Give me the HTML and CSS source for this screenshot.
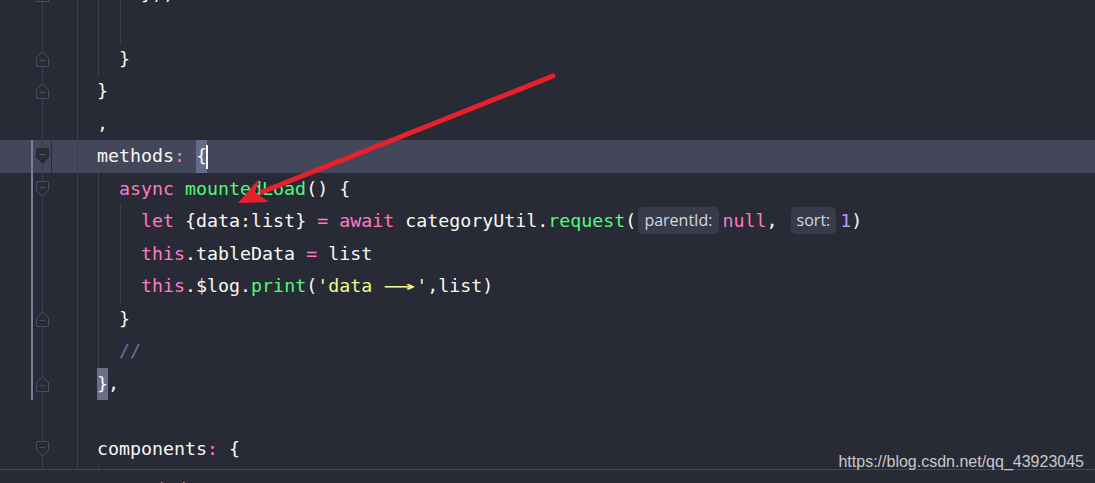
FILE: index.html
```html
<!DOCTYPE html>
<html>

<head>
    <meta charset="utf-8">
    <link rel="stylesheet" href="styles.css">
</head>

<body>
    <div class="editor">
        <div class="lines">
            <div class="line">
                <div class="gutter"><svg class="fold" viewBox="0 0 13 16"><path d="M0.5 15.5V6.5L6.5 0.5L12.5 6.5V15.5Z"/><path class="minus" d="M3.5 9.5H9.5"/></svg></div>
                <div class="code g1 g2">    }),</div>
            </div>
            <div class="line">
                <div class="gutter"></div>
                <div class="code g1 g2"></div>
            </div>
            <div class="line">
                <div class="gutter"><svg class="fold" viewBox="0 0 13 16"><path d="M0.5 15.5V6.5L6.5 0.5L12.5 6.5V15.5Z"/><path class="minus" d="M3.5 9.5H9.5"/></svg></div>
                <div class="code g1">  }</div>
            </div>
            <div class="line">
                <div class="gutter"><svg class="fold" viewBox="0 0 13 16"><path d="M0.5 15.5V6.5L6.5 0.5L12.5 6.5V15.5Z"/><path class="minus" d="M3.5 9.5H9.5"/></svg></div>
                <div class="code">}</div>
            </div>
            <div class="line">
                <div class="gutter"></div>
                <div class="code">,</div>
            </div>
            <div class="line current">
                <div class="gutter scope"><svg class="fold solid" viewBox="0 0 13 16"><path d="M0.5 0.5H12.5V9.5L6.5 15.5L0.5 9.5Z"/><path class="minus" d="M3.5 6.5H9.5"/></svg></div>
                <div class="code">methods<span class="kw">:</span> <span class="match">{</span><span class="caret"></span></div>
            </div>
            <div class="line">
                <div class="gutter scope"><svg class="fold" viewBox="0 0 13 16"><path d="M0.5 0.5H12.5V9.5L6.5 15.5L0.5 9.5Z"/><path class="minus" d="M3.5 6.5H9.5"/></svg></div>
                <div class="code g1">  <span class="kw">async</span> <span class="fn">mountedLoad</span>() {</div>
            </div>
            <div class="line">
                <div class="gutter scope"></div>
                <div class="code g1 g2">    <span class="kw">let</span> {data:list} <span class="kw">=</span> <span class="kw">await</span> categoryUtil.<span class="fn">request</span>(<span class="hint">parentId:</span><span class="kw">null</span>, <span class="hint">sort:</span><span class="num">1</span>)</div>
            </div>
            <div class="line">
                <div class="gutter scope"></div>
                <div class="code g1 g2">    <span class="kw">this</span>.tableData <span class="kw">=</span> list</div>
            </div>
            <div class="line">
                <div class="gutter scope"></div>
                <div class="code g1 g2">    <span class="kw">this</span>.$log.<span class="fn">print</span>(<span class="str">'data <span class="lig"><span>⟶</span></span>'</span>,list)</div>
            </div>
            <div class="line">
                <div class="gutter scope"><svg class="fold" viewBox="0 0 13 16"><path d="M0.5 15.5V6.5L6.5 0.5L12.5 6.5V15.5Z"/><path class="minus" d="M3.5 9.5H9.5"/></svg></div>
                <div class="code g1">  }</div>
            </div>
            <div class="line">
                <div class="gutter scope"></div>
                <div class="code g1">  <span class="comment">//</span></div>
            </div>
            <div class="line">
                <div class="gutter scope"><svg class="fold" viewBox="0 0 13 16"><path d="M0.5 15.5V6.5L6.5 0.5L12.5 6.5V15.5Z"/><path class="minus" d="M3.5 9.5H9.5"/></svg></div>
                <div class="code"><span class="match dim">}</span>,</div>
            </div>
            <div class="line">
                <div class="gutter"></div>
                <div class="code"></div>
            </div>
            <div class="line">
                <div class="gutter"><svg class="fold" viewBox="0 0 13 16"><path d="M0.5 0.5H12.5V9.5L6.5 15.5L0.5 9.5Z"/><path class="minus" d="M3.5 6.5H9.5"/></svg></div>
                <div class="code">components<span class="kw">:</span> {</div>
            </div>
            <div class="line">
                <div class="gutter"></div>
                <div class="code g1"></div>
            </div>
        </div>
    </div>

    <div class="breadcrumbs">
        <span>script</span>
        <span class="sep">&gt;</span>
        <span>methods</span>
    </div>

    <div class="watermark">https://blog.csdn.net/qq_43923045</div>

    <svg class="annotation" width="1095" height="483" viewBox="0 0 1095 483">
        <line x1="553" y1="76" x2="262" y2="192" />
        <polygon points="238,203 259,179 255,192 269,202" />
    </svg>
</body>

</html>
```

FILE: styles.css
```css
/* editor look, Dracula-like colours */

body {
    margin: 0;
    background-color: #282a36;
    overflow: hidden;
    position: relative;
    height: 483px;
}

.editor {
    height: 469px;
    overflow: hidden;
    border-bottom: 1px solid #44475a;
}

.lines {
    margin-top: -22.5px;
}

.line {
    display: flex;
    height: 32.5px;
}

.line.current {
    background-color: #44475a;
}

.gutter {
    flex: none;
    width: 77px;
    border-right: 1px solid #3d4050;
    display: flex;
    align-items: center;
    background-image: linear-gradient(#3b3e4e, #3b3e4e);
    background-size: 1px 100%;
    background-position: 42px 0;
    background-repeat: no-repeat;
}

.gutter.scope {
    background-image: linear-gradient(#7a7f9c, #7a7f9c), linear-gradient(#3b3e4e, #3b3e4e);
    background-size: 2px 100%, 1px 100%;
    background-position: 31px 0, 42px 0;
}

.current .gutter {
    background-image: linear-gradient(#7a7f9c, #7a7f9c), linear-gradient(#3b3e4e, #3b3e4e), linear-gradient(#2a2c38, #2a2c38);
    background-size: 2px 100%, 1px 100%, 1px 100%;
    background-position: 31px 0, 42px 0, 51px 0;
}

.fold {
    width: 13px;
    height: 16px;
    margin-left: 36px;
}

.fold path {
    fill: #282a36;
    stroke: #4a4d5e;
    stroke-width: 1;
}

.fold path.minus {
    fill: none;
}

.fold.solid path {
    fill: #2a2c38;
    stroke: #2a2c38;
}

.fold.solid path.minus {
    stroke: #5a5e74;
}

.code {
    flex: 1;
    padding-left: 19px;
    white-space: pre;
    font-family: "DejaVu Sans Mono", monospace;
    font-size: 18.3px;
    line-height: 32.5px;
    color: #f8f8f2;
    background-repeat: no-repeat;
}

.code.g1 {
    background-image: linear-gradient(#3d4050, #3d4050);
    background-size: 1px 100%;
    background-position: 20px 0;
}

.code.g1.g2 {
    background-image: linear-gradient(#3d4050, #3d4050), linear-gradient(#3d4050, #3d4050);
    background-size: 1px 100%, 1px 100%;
    background-position: 20px 0, 42px 0;
}

.kw {
    color: #ff79c6;
}

.fn {
    color: #50fa7b;
}

.str {
    color: #f1fa8c;
}

.num {
    color: #bd93f9;
}

.comment {
    color: #6272a4;
}

.lig {
    display: inline-block;
    width: 3ch;
    text-align: center;
}

.lig span {
    display: inline-block;
    transform: scaleX(2.3);
}

.match {
    display: inline-block;
    background-color: #646a8a;
    line-height: 32.5px;
}

.match.dim {
    background-color: #6a6e88;
}

.caret {
    display: inline-block;
    width: 2px;
    height: 24px;
    vertical-align: middle;
    background-color: #f8f8f2;
    margin-left: -1px;
}

.hint {
    display: inline-block;
    font-family: "Open Sans", sans-serif;
    font-size: 16px;
    line-height: 27px;
    padding: 0 6px;
    margin: 0 4px 0 2px;
    border-radius: 5px;
    background-color: #393b4a;
    color: #d3d6e0;
    vertical-align: 1px;
}

.breadcrumbs {
    display: flex;
    gap: 14px;
    padding: 9px 0 0 62px;
    font-family: "Open Sans", sans-serif;
    font-size: 14px;
    line-height: 18px;
    color: #b8bac4;
}

.watermark {
    position: absolute;
    right: 11px;
    top: 452px;
    font-family: "Liberation Sans", Arial, sans-serif;
    font-size: 16px;
    line-height: 20px;
    color: #c9c9c9;
}

.annotation {
    position: absolute;
    left: 0;
    top: 0;
    pointer-events: none;
}

.annotation line {
    stroke: #e8202b;
    stroke-width: 5;
    stroke-linecap: round;
}

.annotation polygon {
    fill: #e8202b;
}
```
